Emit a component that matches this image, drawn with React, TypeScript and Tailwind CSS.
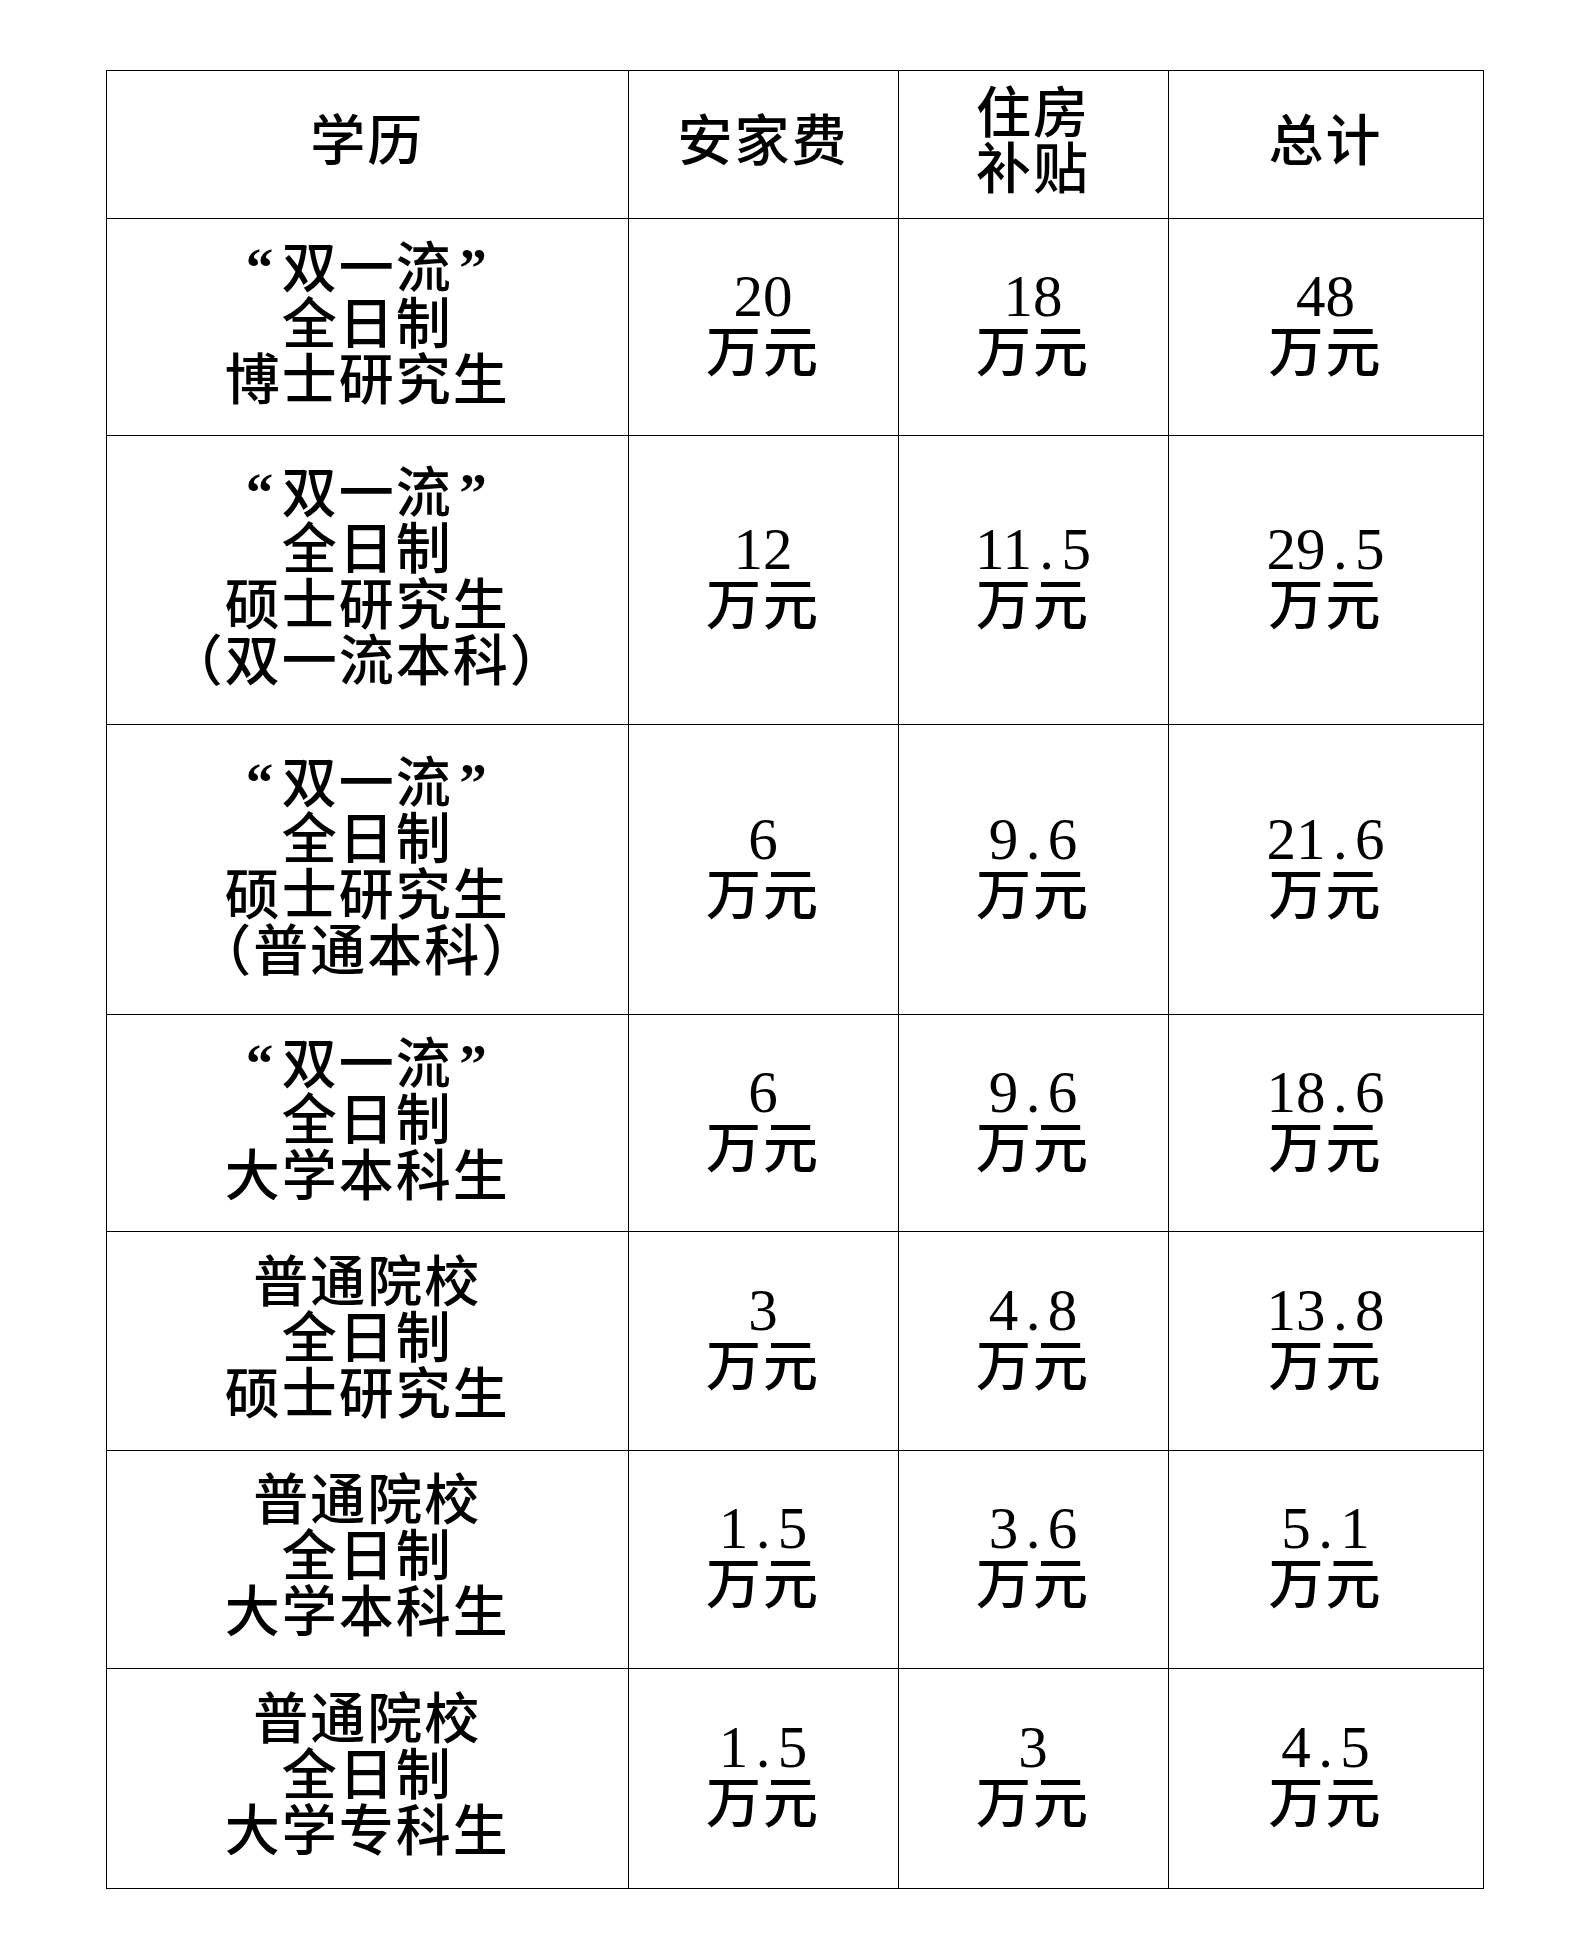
import React from "react";

const cjk = '"Noto Sans CJK SC", "Noto Sans CJK JP", sans-serif';
const serif = '"Liberation Serif", serif';

function renderLine(l: string, key: number) {
  const parts: React.ReactNode[] = [];
  l.split("").forEach((c, i) => {
    if (c === "“") {
      parts.push(
        <span
          key={i}
          className="inline-block align-top relative top-[5px] w-[1em] text-right pr-[0.12em] font-bold"
          style={{ fontFamily: serif }}
        >
          “
        </span>
      );
    } else if (c === "”") {
      parts.push(
        <span
          key={i}
          className="inline-block align-top relative top-[5px] w-[1em] text-left pl-[0.12em] font-bold"
          style={{ fontFamily: serif }}
        >
          ”
        </span>
      );
    } else {
      parts.push(<span key={i}>{c}</span>);
    }
  });
  return (
    <div key={key} className="h-[56px]">
      {parts}
    </div>
  );
}

function Lines({ lines }: { lines: string[] }) {
  return (
    <div
      className="leading-[56px] text-[55px] tracking-[2px] whitespace-nowrap text-black font-medium text-center pb-[16px]"
      style={{ fontFamily: cjk }}
    >
      {lines.map((l, i) => renderLine(l, i))}
    </div>
  );
}

function Val({ v }: { v: string }) {
  return (
    <div className="text-center text-black pb-[16px] whitespace-nowrap">
      <div className="text-[59px] leading-[56px] h-[56px] relative top-[5px]" style={{ fontFamily: serif }}>
        {v.split("").map((c, i) =>
          c === "." ? (
            <span key={i} className="inline-block w-[0.5em] text-center">.</span>
          ) : (
            <span key={i}>{c}</span>
          )
        )}
      </div>
      <div className="text-[55px] leading-[56px] h-[56px] tracking-[2px] font-medium" style={{ fontFamily: cjk }}>
        万元
      </div>
    </div>
  );
}

const rows: { h: string; edu: string[]; a: string; b: string; c: string }[] = [
  { h: "h-[217.5px]", edu: ["“双一流”", "全日制", "博士研究生"], a: "20", b: "18", c: "48" },
  { h: "h-[289px]", edu: ["“双一流”", "全日制", "硕士研究生", "（双一流本科）"], a: "12", b: "11.5", c: "29.5" },
  { h: "h-[290px]", edu: ["“双一流”", "全日制", "硕士研究生", "（普通本科）"], a: "6", b: "9.6", c: "21.6" },
  { h: "h-[217px]", edu: ["“双一流”", "全日制", "大学本科生"], a: "6", b: "9.6", c: "18.6" },
  { h: "h-[219px]", edu: ["普通院校", "全日制", "硕士研究生"], a: "3", b: "4.8", c: "13.8" },
  { h: "h-[217.5px]", edu: ["普通院校", "全日制", "大学本科生"], a: "1.5", b: "3.6", c: "5.1" },
  { h: "h-[220px]", edu: ["普通院校", "全日制", "大学专科生"], a: "1.5", b: "3", c: "4.5" },
];

export default function App() {
  const td = "border-[1.5px] border-black p-0 align-middle text-center";
  return (
    <div lang="zh-CN" className="w-[1587px] h-[1959px] bg-white pt-[70px] pl-[106px]">
      <table className="table-fixed border-collapse w-[1376.5px]">
        <colgroup>
          <col className="w-[521.5px]" />
          <col className="w-[270px]" />
          <col className="w-[270px]" />
          <col className="w-[315px]" />
        </colgroup>
        <tbody>
          <tr className="h-[147.5px]">
            <td className={td}><Lines lines={["学历"]} /></td>
            <td className={td}><Lines lines={["安家费"]} /></td>
            <td className={td}><Lines lines={["住房", "补贴"]} /></td>
            <td className={td}><Lines lines={["总计"]} /></td>
          </tr>
          {rows.map((r, i) => (
            <tr key={i} className={r.h}>
              <td className={td}><Lines lines={r.edu} /></td>
              <td className={td}><Val v={r.a} /></td>
              <td className={td}><Val v={r.b} /></td>
              <td className={td}><Val v={r.c} /></td>
            </tr>
          ))}
        </tbody>
      </table>
    </div>
  );
}
